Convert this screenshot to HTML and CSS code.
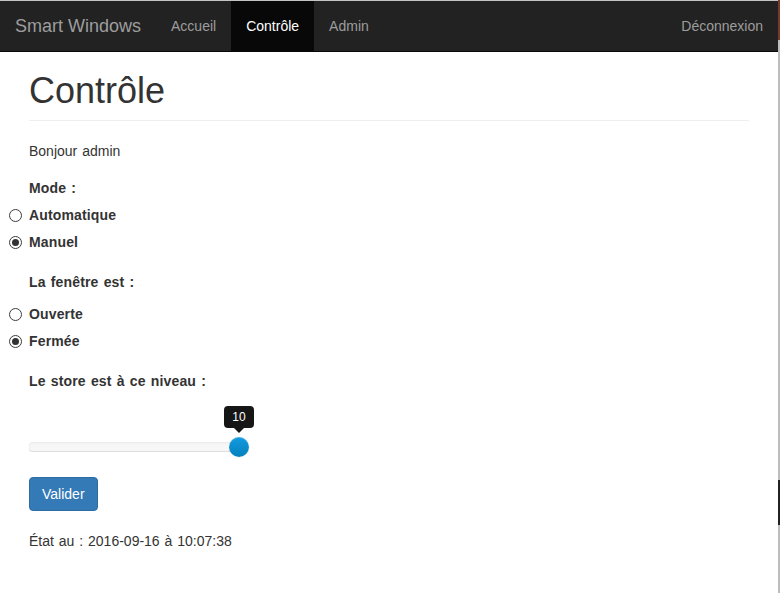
FILE: index.html
```html
<!DOCTYPE html>
<html lang="fr">
<head>
<meta charset="utf-8">
<title>Smart Windows - Contrôle</title>
<link rel="stylesheet" href="styles.css">
</head>
<body>
<div class="page">
  <div class="main">
    <nav class="navbar">
      <div class="nav-left">
        <a class="brand" href="#">Smart Windows</a>
        <a class="nav-link" href="#">Accueil</a>
        <a class="nav-link active" href="#">Contrôle</a>
        <a class="nav-link" href="#">Admin</a>
      </div>
      <a class="nav-link" href="#">Déconnexion</a>
    </nav>
    <div class="container">
      <div class="page-header"><h1>Contrôle</h1></div>
      <p class="hello">Bonjour admin</p>
      <div class="label">Mode :</div>
      <div class="radio first"><span class="dot"></span><span class="rlabel">Automatique</span></div>
      <div class="radio"><span class="dot checked"></span><span class="rlabel">Manuel</span></div>
      <div class="label gap">La fenêtre est :</div>
      <div class="radio first2"><span class="dot"></span><span class="rlabel">Ouverte</span></div>
      <div class="radio"><span class="dot checked"></span><span class="rlabel">Fermée</span></div>
      <div class="label gap">Le store est à ce niveau :</div>
      <div class="slider">
        <div class="track"></div>
        <div class="handle"></div>
        <div class="tip">10</div>
      </div>
      <button class="btn">Valider</button>
      <p class="state">État au : 2016-09-16 à 10:07:38</p>
    </div>
  </div>
  <div class="edge"></div>
</div>
</body>
</html>
```

FILE: styles.css
```css
html, body {
  margin: 0;
  padding: 0;
  background: #fff;
}
body {
  font-family: "Liberation Sans", Arial, sans-serif;
  font-size: 14px;
  line-height: 20px;
  color: #333;
}
.page {
  display: flex;
  width: 780px;
  height: 593px;
  overflow: hidden;
}
.main {
  width: 778px;
  border-top: 1px solid #c4c4c4;
}
.edge {
  width: 2px;
  background: linear-gradient(#7a3b2c 0, #7a3b2c 40px, #bdbdbd 40px, #bdbdbd 480px, #222 480px, #222 525px, #bdbdbd 525px);
}
.navbar {
  height: 50px;
  background: #222;
  border-bottom: 1px solid #080808;
  display: flex;
  justify-content: space-between;
  align-items: stretch;
}
.nav-left {
  display: flex;
  align-items: stretch;
}
.brand {
  font-size: 18px;
  color: #9d9d9d;
  text-decoration: none;
  padding: 0 15px;
  display: flex;
  align-items: center;
}
.nav-link {
  color: #9d9d9d;
  text-decoration: none;
  padding: 0 15px;
  display: flex;
  align-items: center;
}
.nav-link.active {
  color: #fff;
  background: #080808;
}
.container {
  width: 720px;
  margin-left: 29px;
  padding-top: 19px;
}
.page-header {
  padding-bottom: 9px;
  border-bottom: 1px solid #eee;
  margin-bottom: 20px;
}
h1 {
  margin: 0;
  font-size: 36px;
  font-weight: 500;
  line-height: 40px;
}
.hello, .state {
  word-spacing: 1px;
}
.hello {
  margin: 0 0 17px;
}
.label {
  font-weight: bold;
  word-spacing: 1.1px;
  letter-spacing: 0.15px;
}
.label.gap {
  margin-top: 20px;
}
.radio {
  display: flex;
  align-items: center;
  margin-top: 7px;
  font-weight: bold;
  letter-spacing: 0.15px;
}
.radio.first2 {
  margin-top: 12px;
}
.dot {
  box-sizing: border-box;
  width: 13px;
  height: 13px;
  border: 1px solid #3d3d3d;
  border-radius: 50%;
  margin-left: -20px;
  margin-right: 7px;
  display: flex;
  align-items: center;
  justify-content: center;
  background: #fff;
}
.dot.checked::after {
  content: "";
  width: 7px;
  height: 7px;
  border-radius: 50%;
  background: #333;
}
.slider {
  position: relative;
  width: 210px;
  height: 20px;
  margin-top: 46px;
}
.track {
  position: absolute;
  left: 0;
  right: 0;
  top: 5px;
  height: 10px;
  border-radius: 4px;
  background: linear-gradient(#f5f5f5, #f9f9f9);
  box-shadow: inset 0 -1px 1px rgba(0,0,0,.12), inset 0 1px 2px rgba(0,0,0,.05);
}
.handle {
  position: absolute;
  left: 200px;
  top: 0;
  width: 20px;
  height: 20px;
  border-radius: 50%;
  background: linear-gradient(#149bdf, #0480be);
  box-shadow: inset 0 1px 0 rgba(255,255,255,.2), 0 1px 2px rgba(0,0,0,.05);
}
.tip {
  position: absolute;
  left: 195px;
  top: -31px;
  width: 30px;
  height: 22px;
  line-height: 22px;
  text-align: center;
  font-size: 12px;
  color: #fff;
  background: #161616;
  border-radius: 4px;
}
.tip::after {
  content: "";
  position: absolute;
  left: 10px;
  bottom: -5px;
  border-left: 5px solid transparent;
  border-right: 5px solid transparent;
  border-top: 5px solid #161616;
}
.btn {
  display: block;
  margin-top: 20px;
  font-family: inherit;
  font-size: 14px;
  line-height: 20px;
  padding: 6px 12px;
  color: #fff;
  background: #337ab7;
  border: 1px solid #2e6da4;
  border-radius: 4px;
}
.state {
  margin: 20px 0 0;
}
```
